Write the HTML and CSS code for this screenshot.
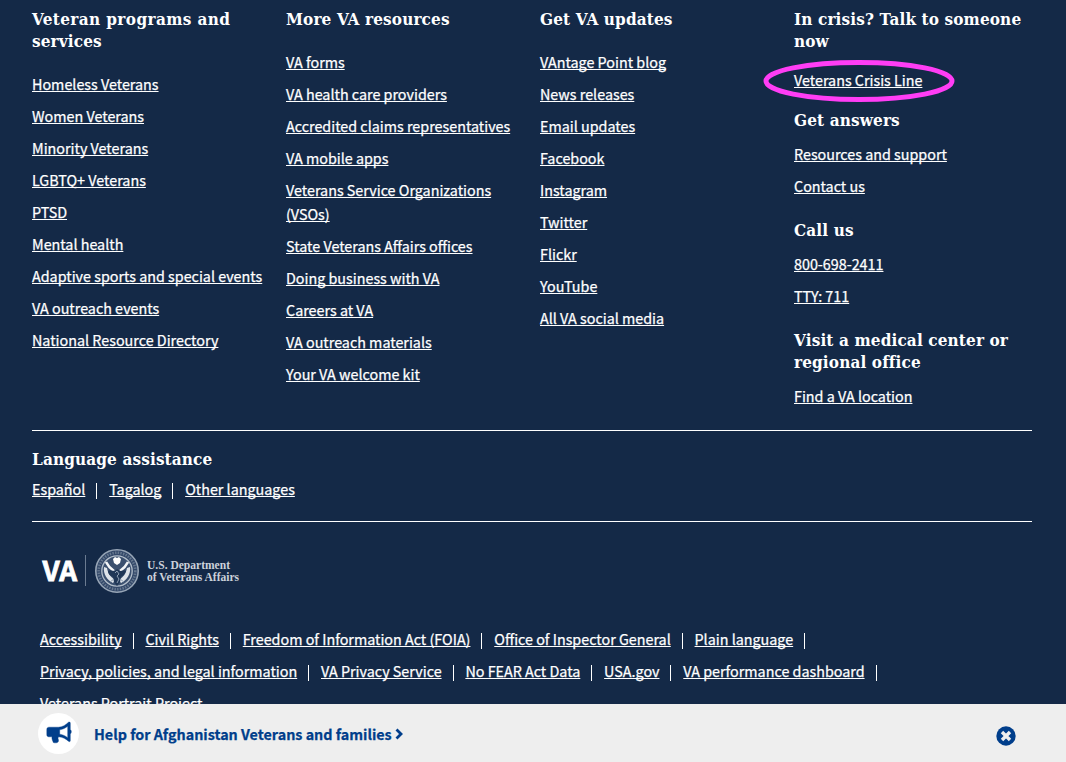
FILE: index.html
```
<!DOCTYPE html>
<html lang="en">
<head>
<meta charset="utf-8">
<title>VA.gov footer</title>
<link rel="stylesheet" href="styles.css">
</head>
<body>
<footer class="footer">
  <div class="columns">
    <section class="col">
      <h2><span class="wide">Veteran programs and</span><br>services</h2>
      <ul>
        <li><a href="#">Homeless Veterans</a></li>
        <li><a href="#">Women Veterans</a></li>
        <li><a href="#">Minority Veterans</a></li>
        <li><a href="#">LGBTQ+ Veterans</a></li>
        <li><a href="#">PTSD</a></li>
        <li><a href="#">Mental health</a></li>
        <li><a href="#">Adaptive sports and special events</a></li>
        <li><a href="#">VA outreach events</a></li>
        <li><a href="#">National Resource Directory</a></li>
      </ul>
    </section>
    <section class="col">
      <h2>More VA resources</h2>
      <ul>
        <li><a href="#">VA forms</a></li>
        <li><a href="#">VA health care providers</a></li>
        <li><a href="#">Accredited claims representatives</a></li>
        <li><a href="#">VA mobile apps</a></li>
        <li><a href="#">Veterans Service Organizations<br>(VSOs)</a></li>
        <li><a href="#">State Veterans Affairs offices</a></li>
        <li><a href="#">Doing business with VA</a></li>
        <li><a href="#">Careers at VA</a></li>
        <li><a href="#">VA outreach materials</a></li>
        <li><a href="#">Your VA welcome kit</a></li>
      </ul>
    </section>
    <section class="col">
      <h2>Get VA updates</h2>
      <ul>
        <li><a href="#">VAntage Point blog</a></li>
        <li><a href="#">News releases</a></li>
        <li><a href="#">Email updates</a></li>
        <li><a href="#">Facebook</a></li>
        <li><a href="#">Instagram</a></li>
        <li><a href="#">Twitter</a></li>
        <li><a href="#">Flickr</a></li>
        <li><a href="#">YouTube</a></li>
        <li><a href="#">All VA social media</a></li>
      </ul>
    </section>
    <section class="col contact">
      <h2>In crisis? Talk to someone<br>now</h2>
      <ul class="crisis">
        <li><a href="#">Veterans Crisis Line</a>
          <svg class="ring" width="194" height="44" viewBox="0 0 194 44"><ellipse cx="97" cy="22" rx="93" ry="18.5"/></svg>
        </li>
      </ul>
      <h2>Get answers</h2>
      <ul>
        <li><a href="#">Resources and support</a></li>
        <li><a href="#">Contact us</a></li>
      </ul>
      <h2>Call us</h2>
      <ul>
        <li><a href="#">800-698-2411</a></li>
        <li><a href="#">TTY: 711</a></li>
      </ul>
      <h2>Visit a medical center or<br>regional office</h2>
      <ul>
        <li><a href="#">Find a VA location</a></li>
      </ul>
    </section>
  </div>
  <section class="language">
    <h2>Language assistance</h2>
    <div class="inline-links">
      <a href="#">Español</a><a href="#">Tagalog</a><a href="#">Other languages</a>
    </div>
  </section>
  <svg class="logo" width="204" height="48" viewBox="0 0 204 48">
    <text class="logo-va" x="2.500" y="33.500" textLength="34.500" lengthAdjust="spacingAndGlyphs">VA</text>
    <path d="M45.500 8v31" stroke="#6b7b91"/>
    <circle cx="77" cy="24" r="21.200" fill="#34496a" stroke="#97a5b6" stroke-width="1.600"/>
    <circle cx="77" cy="24" r="18.300" fill="none" stroke="#66788f" stroke-width="2.600" stroke-dasharray="1.400 1.300"/>
    <circle cx="77" cy="24" r="15.200" fill="#3b506f" stroke="#b4bfcb" stroke-width="1.300"/>
    <path d="M64 20c-1 7 3 13 9 16l2-3c-4-3-7-6-8-12zM90 20c1 7-3 13-9 16l-2-3c4-3 7-6 8-12z" fill="#dfe4ea"/>
    <path d="M66 15c2 4 5 7 8 9M88 15c-2 4-5 7-8 9" stroke="#f4f6f8" stroke-width="2.600" fill="none"/>
    <path d="M73 12l2-2 2 1 2-1 2 2-1 4-3 2-3-2z" fill="#fff"/>
    <path d="M68 24c3-1 5 0 7 0l2-2 3 2c2 0 4-1 6 0-1 3-3 5-5 6l-1 5-3 4-3-4-1-5c-3-1-5-3-5-6z" fill="#203757"/>
    <path d="M75 26l2-2 2 3-2 2 2 3-2 4M70 35l4-3M84 35l-4-3" stroke="#8c9cb0" fill="none"/>
    <text class="logo-name" x="107" y="22" textLength="83" lengthAdjust="spacingAndGlyphs">U.S. Department</text>
    <text class="logo-name" x="107" y="34" textLength="92" lengthAdjust="spacingAndGlyphs">of Veterans Affairs</text>
  </svg>
  <nav class="legal">
    <div class="inline-links">
      <a href="#">Accessibility</a><a href="#">Civil Rights</a><a href="#">Freedom of Information Act (FOIA)</a><a href="#">Office of Inspector General</a><a href="#">Plain language</a>
    </div>
    <div class="inline-links">
      <a href="#">Privacy, policies, and legal information</a><a href="#">VA Privacy Service</a><a href="#">No FEAR Act Data</a><a href="#">USA.gov</a><a href="#">VA performance dashboard</a>
    </div>
    <div class="inline-links last">
      <a href="#">Veterans Portrait Project</a>
    </div>
  </nav>
</footer>
<aside class="banner">
  <span class="badge">
    <svg width="26" height="24" viewBox="0 0 26 24">
      <path d="M3 6.200H12.500C16.500 6.200 20 3.700 22.500 1.200C23.500 .7 24.300 1.200 24.300 2.200V8.500C25.700 9.500 25.700 12 24.300 13V19.500C24.300 20.700 23.500 21 22.500 20.300C20 18 17 16.200 12.700 15.800C11.700 17 12 18 12.600 19C12.200 20 12.700 20.700 11.700 21.300C10.500 22 8.500 22 7.300 21.500C6.600 19.500 5.600 18 6 15.800H3C1.700 15.800 .8 15 .8 13.700V8.400C.8 7.100 1.700 6.200 3 6.200zM13.700 8.800V13.200C16.800 13.600 19.500 15 21.700 16.700V5.200C19.500 7 16.800 8.400 13.700 8.800z" fill="#003e8b" stroke="#003e8b" stroke-width=".4" fill-rule="evenodd"/>
    </svg>
  </span>
  <a class="banner-link" href="#">Help for Afghanistan Veterans and families</a>
  <svg class="chevron" width="8" height="12" viewBox="0 0 8 12"><path d="M1.500 1.500L6 6L1.500 10.500" fill="none" stroke="#003e8b" stroke-width="2.800"/></svg>
  <svg class="close" width="20" height="20" viewBox="0 0 20 20"><circle cx="10" cy="10" r="9.700" fill="#003e8b"/><path d="M7.200 7.200l5.600 5.600M12.800 7.200l-5.600 5.600" stroke="#eee" stroke-width="3.400" stroke-linecap="square"/></svg>
</aside>
</body>
</html>
```
FILE: styles.css
```
* { box-sizing: border-box; }
body {
  margin: 0;
  height: 762px;
  overflow: hidden;
  display: flex;
  flex-direction: column;
  background: #142947;
  color: #fff;
  font-family: "Noto Sans CJK SC", "Open Sans", sans-serif;
  font-size: 14.33px;
  line-height: 24px;
}
.footer { height: 704px; overflow: hidden; padding: 8px 34px 0 32px; }
.columns {
  display: grid;
  grid-template-columns: repeat(4, 254px);
  height: 423px;
  width: 1000px;
  border-bottom: 1px solid #fff;
}
h2 {
  margin: 0 0 20px;
  font-family: "DejaVu Serif Condensed", "DejaVu Serif", serif;
  font-stretch: condensed;
  font-size: 17px;
  font-weight: bold;
  letter-spacing: .13px;
  line-height: 22px;
  white-space: nowrap;
}
.wide { letter-spacing: .38px; }
ul { margin: 0; padding: 0; list-style: none; display: flex; flex-direction: column; gap: 8px; }
a {
  color: #fff;
  white-space: nowrap;
  -webkit-text-stroke: .25px currentColor;
  text-decoration: underline;
  text-decoration-thickness: 1px;
  text-underline-offset: 1px;
  text-decoration-skip-ink: none;
}
.contact h2 { margin-bottom: 11px; }
.contact h2:first-child { margin-bottom: 16px; }
.contact ul { margin-bottom: 21px; }
.contact .crisis { margin-bottom: 17px; }
.crisis li { position: relative; }
.ring { position: absolute; left: -32.500px; top: -9px; fill: none; stroke: #ff3df5; stroke-width: 5px; }
.language { width: 1000px; height: 91px; padding-top: 17px; border-bottom: 1px solid #fff; }
.language h2 { margin-bottom: 7px; }
.inline-links { display: flex; height: 24px; }
.inline-links a { position: relative; margin-right: 23.800px; }
.inline-links a::after {
  content: "";
  position: absolute;
  right: -12px;
  top: 6px;
  width: 1px;
  height: 16px;
  background: #fff;
}
.language .inline-links a:last-child::after, .last a::after { display: none; }
.logo { display: block; margin: 25px 0 0 8px; }
.logo-va { font: bold 27px "Noto Sans CJK SC", sans-serif; fill: #fff; stroke: #fff; stroke-width: .8px; }
.logo-name { font: bold 12px "Liberation Serif", serif; fill: #cbd1da; }
.legal { display: flex; flex-direction: column; gap: 8px; margin: 32px 0 0 8px; }
.banner { height: 58px; flex: none; display: flex; align-items: center; background: #eee; padding: 0 50px 0 38px; }
.badge { width: 41px; height: 41px; border-radius: 50%; background: #fff; display: flex; align-items: center; justify-content: center; }
.banner-link { margin: 1px 3px 0 15px; color: #003e8b; font-weight: bold; text-decoration: none; }
.chevron { margin-top: 1px; }
.close { margin: 6px 0 0 auto; }
```
